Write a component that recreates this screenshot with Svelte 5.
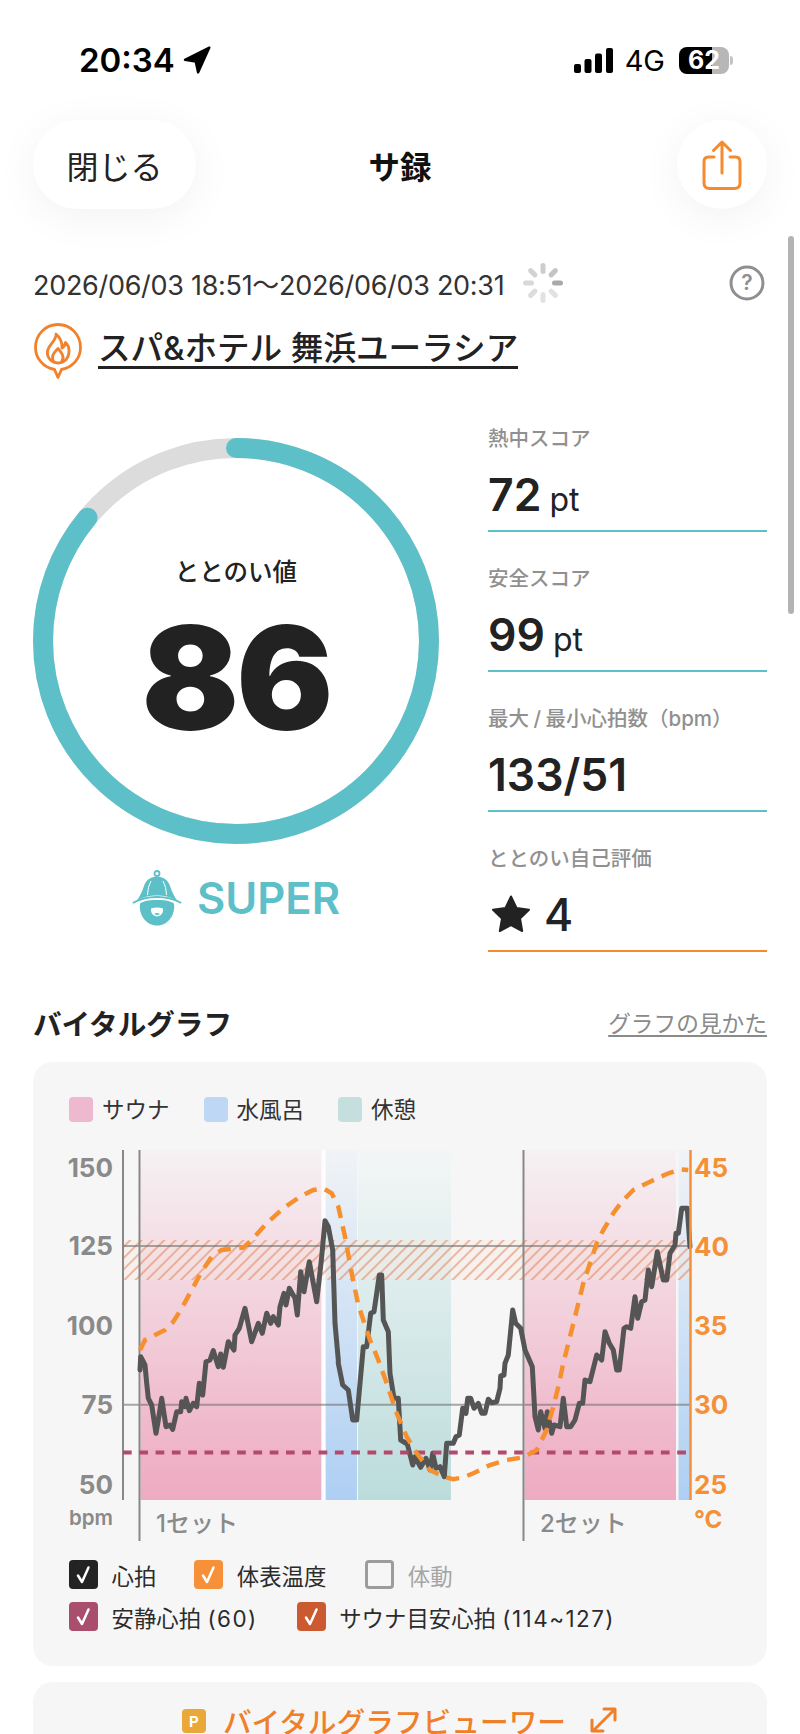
<script>
  // traces were read from magnified crops: each is [origin x, origin y, x scale, y scale, points]
  const map = (ox, oy, sx, sy, pts) => pts.map(([x, y]) => [ox + x / sx, oy + y / sy]);
  const toStr = (list) => list.map(([x, y]) => `${x.toFixed(1)},${y.toFixed(1)}`).join(' ');

  const heart = [
    ...map(30, 1340, 3, 3, [[330,90],[332,50],[345,75],[350,130],[355,175],[365,195],[378,280],[385,240],[395,175],[408,260],[420,255],[428,268],[440,215],[452,215],[455,185],[465,200],[468,175],[478,212],[490,190],[500,200],[508,130],[518,165],[528,65],[540,60],[550,32],[565,80],[572,42],[580,82]]),
    ...map(30, 1060, 3, 3, [[595,845],[612,870],[615,825],[628,805],[645,745],[665,845],[685,790],[697,820],[710,760],[722,790],[730,770],[745,795],[750,740],[762,700],[768,735],[778,685],[795,715],[802,765],[812,635],[822,695],[838,605],[860,725],[875,590],[885,482],[895,500],[908,570],[915,790],[925,900]]),
    ...map(320, 1240, 3, 3, [[55,370],[68,435],[85,450],[98,540],[110,540],[130,320],[140,320],[152,220],[162,215],[170,160],[178,105],[185,105],[190,240],[205,275],[210,400],[222,475],[235,475],[242,600],[262,612],[278,675],[285,650],[302,682],[318,655],[330,690],[338,640],[348,685],[360,680],[373,710],[380,610],[400,610],[408,590],[418,585],[428,505],[438,520],[443,475],[452,475],[462,505],[475,490],[485,520],[495,520],[505,478],[515,488],[530,485],[540,445],[542,408],[552,405],[555,370],[565,345]]),
    ...map(500, 1240, 3, 3, [[38,210],[47,250],[62,265],[75,330],[97,380],[105,530],[115,570],[122,515],[135,565],[142,515],[155,580],[162,555],[180,560],[190,475],[200,560],[212,560],[225,540],[238,490],[248,490],[255,420],[270,425],[290,345],[305,360],[315,275],[328,310],[340,330],[350,390],[358,390],[372,265],[380,260],[392,265],[405,170],[413,235],[425,185],[435,180],[445,90],[455,140],[472,35],[490,120],[500,120],[510,40],[525,15]]),
    ...map(400, 1060, 3, 3, [[828,520],[835,520],[845,445],[862,445],[870,560]])
  ];
  const temp = [
    ...map(30, 1060, 3, 3, [[330,870],[345,840],[375,825],[405,810],[430,785],[455,745],[485,690],[515,635],[545,590],[575,570],[640,563],[670,535],[710,490],[760,445],[810,410],[850,390],[880,385],[905,400],[925,440],[945,530],[965,640],[985,735]]),
    ...map(30, 1340, 3, 3, [[1020,0],[1045,60],[1070,130],[1100,220],[1130,290],[1160,340],[1200,390]]),
    ...map(320, 1240, 3, 3, [[370,710],[400,718],[430,712],[460,700],[510,675],[560,660],[610,652],[650,630],[680,570],[700,500]]),
    ...map(500, 1240, 3, 3, [[175,440],[190,370],[210,290],[230,210],[250,130],[270,70],[290,10]]),
    ...map(400, 1060, 3, 3, [[610,510],[640,460],[665,425],[700,390],[750,365],[800,342],[840,328],[865,330]])
  ];
  const heartPts = toStr(heart);
  const tempPts = toStr(temp);

  const stats = [
    { label: '熱中スコア', value: '72', unit: 'pt' },
    { label: '安全スコア', value: '99', unit: 'pt' },
    { label: '最大 / 最小心拍数（bpm）', value: '133/51', unit: '' }
  ];
  const leftTicks = [['150', 1177], ['125', 1255], ['100', 1335], ['75', 1414], ['50', 1494]];
  const rightTicks = [['45', 1177], ['40', 1256], ['35', 1335], ['30', 1414], ['25', 1494]];
  const spokes = [
    [0, '#a9a9a9'], [45, '#e2e2e2'], [90, '#e2e2e2'], [135, '#dcdcdc'],
    [180, '#d8d8d8'], [225, '#d2d2d2'], [270, '#cdcdcd'], [315, '#c4c4c4']
  ];
  const r = 193;
  const circ = 2 * Math.PI * r;
  const dash = `${(circ * 0.86).toFixed(1)} ${circ.toFixed(1)}`;
</script>

<div class="page">
  <div class="status">
    <div class="time">
      <span>20:34</span>
      <svg class="loc" viewBox="0 0 26 26" width="28" height="28"><path d="M24.500 1.500 L1.800 12.800 L11.800 14.400 L14 24.500 Z" fill="#000" stroke="#000" stroke-width="2.200" stroke-linejoin="round"/></svg>
    </div>
    <div class="sys">
      <svg viewBox="0 0 39 25" width="39" height="25" class="signal">
        <rect x="0" y="16" width="7" height="9" rx="2"/><rect x="10.500" y="11" width="7" height="14" rx="2"/>
        <rect x="21" y="5.500" width="7" height="19.500" rx="2"/><rect x="32" y="0" width="7" height="25" rx="2"/>
      </svg>
      <span class="net">4G</span>
      <div class="batt"><span>62</span></div>
    </div>
  </div>

  <header class="nav">
    <button class="close">閉じる</button>
    <div class="navtitle">サ録</div>
    <button class="share" aria-label="共有">
      <svg viewBox="0 0 40 50" width="40" height="50" fill="none" stroke="#f58a2e" stroke-width="3" stroke-linecap="round" stroke-linejoin="round">
        <path d="M12 17 H6.500 Q2 17 2 21.500 V43 Q2 48.500 7.500 48.500 H32.500 Q38 48.500 38 43 V21.500 Q38 17 33.500 17 H28"/>
        <path d="M20 33 V2 M11.500 10.500 L20 2 L28.500 10.500"/>
      </svg>
    </button>
  </header>

  <main class="content">
    <div class="meta">
      <span class="date">2026/06/03 18:51～2026/06/03 20:31</span>
      <svg class="spin" viewBox="-20 -20 40 40" width="40" height="40">
        {#each spokes as [a, c]}
          <rect x="9" y="-2.500" width="11" height="5" rx="2.500" fill={c} transform="rotate({a})"/>
        {/each}
      </svg>
      <svg class="help" viewBox="0 0 36 36" width="36" height="36">
        <circle cx="18" cy="18" r="16" fill="none" stroke="#8f8f8f" stroke-width="3"/>
        <text x="18" y="25" text-anchor="middle" class="q">?</text>
      </svg>
    </div>

    <div class="place">
      <svg viewBox="0 0 48 56" width="48" height="56" fill="none" stroke="#f2812b" stroke-width="2.800" stroke-linejoin="round" stroke-linecap="round">
        <path d="M20.500 46.500 C9 44.500 1.500 35 1.500 24.500 C1.500 11.500 11.500 1.500 24 1.500 C36.500 1.500 46.500 11.500 46.500 24.500 C46.500 35 39 44.500 27.500 46.500 L24 54.500 Z"/>
        <path d="M22 11 C23 17 15 21 13.500 28 C12.500 35 18 40 24 40 C31 40 35.500 34 35 27 C35 24 33.500 21.500 31.500 19.500 C31 22.500 30 24 28 25 C28.500 20 26 14 22 11 Z"/>
        <path d="M20 39 C17 34 18.500 31 24 25.500 C28 30 31 34 27.500 39"/>
      </svg>
      <a class="placename">スパ&ホテル 舞浜ユーラシア</a>
    </div>

    <section class="scores">
      <div class="gaugecol">
        <div class="gauge">
          <svg viewBox="0 0 406 406" width="406" height="406" class="ring">
            <circle cx="203" cy="203" r={r} fill="none" stroke="#dcdcdc" stroke-width="20"/>
            <circle cx="203" cy="203" r={r} fill="none" stroke="#5dc0c8" stroke-width="20" stroke-linecap="round" stroke-dasharray={dash} transform="rotate(-90 203 203)"/>
          </svg>
          <div class="gaugetext">
            <div class="gl">ととのい値</div>
            <div class="gv">86</div>
          </div>
        </div>
        <div class="rank">
          <svg viewBox="0 0 50 56" width="50" height="56">
            <circle cx="25" cy="3.500" r="2.500" fill="none" stroke="#5dc0c8" stroke-width="1.800"/>
            <path d="M5 30.500 C8 26 10 22 12 16 C14 10 19 6.500 25 6.500 C31 6.500 36 10 38 16 C40 22 42 26 45 30.500 C38 26.500 32 25.500 25 25.500 C18 25.500 12 26.500 5 30.500 Z" fill="#5dc0c8"/>
            <path d="M19 11 Q15.500 17 15.500 25 M31 11 Q34.500 17 34.500 25" fill="none" stroke="#fff" stroke-width="1"/>
            <path d="M0.800 33 C10 27.500 17 27 25 27 C33 27 40 27.500 49.200 33" fill="none" stroke="#5dc0c8" stroke-width="1.800"/>
            <path d="M8 33.500 C14 30 19 30 25 30 C31 30 36 30 42 33.500 C43.500 45 36 55.500 25 55.500 C14 55.500 6.500 45 8 33.500 Z" fill="#5dc0c8"/>
            <path d="M19 38.500 Q25 36.500 31 38.500 Q31.500 45.500 25 46.500 Q18.500 45.500 19 38.500 Z" fill="#fff"/>
            <path d="M22 44 Q25 42 28 44 Q25 46 22 44 Z" fill="#5dc0c8"/>
          </svg>
          <span>SUPER</span>
        </div>
      </div>

      <div class="stats">
        {#each stats as s}
          <div class="stat">
            <div class="sl">{s.label}</div>
            <div class="sv">{s.value}{#if s.unit}<span class="unit">{s.unit}</span>{/if}</div>
          </div>
        {/each}
        <div class="stat self">
          <div class="sl">ととのい自己評価</div>
          <div class="sv star">
            <svg viewBox="0 0 40 38" width="40" height="38"><path d="M20 1.500 L25.500 13 L38 14.800 L29 23.500 L31.200 36 L20 30 L8.800 36 L11 23.500 L2 14.800 L14.500 13 Z" fill="#222" stroke="#222" stroke-width="2" stroke-linejoin="round"/></svg>
            <span>4</span>
          </div>
        </div>
      </div>
    </section>

    <div class="secthead">
      <h2>バイタルグラフ</h2>
      <a class="how">グラフの見かた</a>
    </div>

    <section class="card graph">
      <div class="legend">
        <div class="li"><i class="sw sauna"></i>サウナ</div>
        <div class="li"><i class="sw water"></i>水風呂</div>
        <div class="li"><i class="sw rest"></i>休憩</div>
      </div>

      <svg class="chart" viewBox="33 1148 734 393" width="734" height="393">
        <defs>
          <linearGradient id="gs" x1="0" y1="0" x2="0" y2="1"><stop offset="0" stop-color="#f6f1f3"/><stop offset="1" stop-color="#eeaac1"/></linearGradient>
          <linearGradient id="gw" x1="0" y1="0" x2="0" y2="1"><stop offset="0" stop-color="#f1f3f6"/><stop offset="1" stop-color="#aecff3"/></linearGradient>
          <linearGradient id="gr" x1="0" y1="0" x2="0" y2="1"><stop offset="0" stop-color="#f3f6f6"/><stop offset="1" stop-color="#bcdcdc"/></linearGradient>
          <pattern id="hatch" width="8" height="8" patternUnits="userSpaceOnUse" patternTransform="rotate(45)">
            <line x1="1" y1="0" x2="1" y2="8" stroke="#e0714a" stroke-width="1.500" stroke-opacity=".6"/>
          </pattern>
        </defs>

        <rect x="140.500" y="1150" width="181" height="350" fill="url(#gs)"/>
        <rect x="325.500" y="1150" width="31.500" height="350" fill="url(#gw)"/>
        <rect x="358" y="1150" width="93" height="350" fill="url(#gr)"/>
        <rect x="524.500" y="1150" width="151.500" height="350" fill="url(#gs)"/>
        <rect x="678.500" y="1150" width="12" height="350" fill="url(#gw)"/>
        <rect x="321.500" y="1150" width="4" height="350" fill="#fff" fill-opacity=".8"/>

        <rect x="123" y="1240" width="567" height="40" fill="#f6e8de" fill-opacity=".35"/>
        <rect x="123" y="1240" width="567" height="40" fill="url(#hatch)"/>

        <line x1="123" y1="1246" x2="690" y2="1246" class="grid"/>
        <line x1="123" y1="1404.700" x2="690" y2="1404.700" class="grid"/>
        <line x1="123" y1="1150" x2="123" y2="1500" class="axis"/>
        <line x1="139.500" y1="1150" x2="139.500" y2="1541" class="axis"/>
        <line x1="523.500" y1="1150" x2="523.500" y2="1541" class="axis"/>

        <polyline points={heartPts} class="heart"/>
        <line x1="123" y1="1452.500" x2="686" y2="1452.500" class="restline"/>
        <polyline points={tempPts} class="temp"/>
        <line x1="690.500" y1="1150" x2="690.500" y2="1500" class="axisr"/>

        {#each leftTicks as [t, y]}
          <text x="113" y={y} text-anchor="end" class="tick">{t}</text>
        {/each}
        {#each rightTicks as [t, y]}
          <text x="694" y={y} class="tick or">{t}</text>
        {/each}
        <text x="113" y="1525" text-anchor="end" class="bpm">bpm</text>
        <text x="694" y="1528" class="tick or unitc">°C</text>
        <text x="156" y="1532" class="setl">1セット</text>
        <text x="540" y="1532" class="setl">2セット</text>
      </svg>

      <div class="checks">
        <div class="chk" style="--c:#232323"><i class="box"><svg viewBox="0 0 29 29"><path d="M9 15.500 L13 22 L19.500 7.500"/></svg></i>心拍</div>
        <div class="chk" style="--c:#f6913a"><i class="box"><svg viewBox="0 0 29 29"><path d="M9 15.500 L13 22 L19.500 7.500"/></svg></i>体表温度</div>
        <div class="chk off"><i class="box"></i>体動</div>
      </div>
      <div class="checks two">
        <div class="chk" style="--c:#a94f6d"><i class="box"><svg viewBox="0 0 29 29"><path d="M9 15.500 L13 22 L19.500 7.500"/></svg></i><span>安静心拍{' '}<span class="num">(60)</span></span></div>
        <div class="chk" style="--c:#cc5a30"><i class="box"><svg viewBox="0 0 29 29"><path d="M9 15.500 L13 22 L19.500 7.500"/></svg></i><span>サウナ目安心拍{' '}<span class="num">(114~127)</span></span></div>
      </div>
    </section>

    <section class="card viewer">
      <i class="pbadge">P</i>
      <span class="vt">バイタルグラフビューワー</span>
      <svg viewBox="0 0 28 28" width="28" height="28" fill="none" stroke="#f07f2a" stroke-width="3" stroke-linecap="round" stroke-linejoin="round">
        <path d="M4 24 L24 4 M14 3 H25 V14 M2 14 V25 H13"/>
      </svg>
    </section>
  </main>

  <div class="scrollbar"></div>
</div>

<style>
  :global(body) { margin: 0; background: #fff; }
  .page {
    position: relative;
    width: 800px;
    height: 1734px;
    overflow: hidden;
    background: #fff;
    color: #222;
    font-family: Inter, "Noto Sans CJK JP", sans-serif;
  }
  .status {
    display: flex;
    justify-content: space-between;
    align-items: center;
    box-sizing: border-box;
    height: 120px;
    padding: 0 71px 0 79px;
    color: #000;
  }
  .time { display: flex; align-items: center; gap: 8px; font-size: 33px; font-weight: 600; line-height: 1; }
  .sys { display: flex; align-items: center; }
  .signal { fill: #000; }
  .net { margin-left: 12px; font-size: 29px; font-weight: 400; line-height: 1; }
  .batt {
    position: relative;
    width: 50px;
    height: 27px;
    margin-left: 14px;
    border-radius: 8px;
    background: linear-gradient(90deg, #000 66%, #b7b7b7 66%);
    display: flex;
    align-items: center;
    justify-content: center;
    color: #fff;
    font-size: 25px;
    font-weight: 700;
  }
  .batt::after {
    content: "";
    position: absolute;
    right: -4px;
    top: 9px;
    width: 3px;
    height: 9px;
    border-radius: 0 3px 3px 0;
    background: #c4c4c4;
  }
  .nav {
    display: grid;
    grid-template-columns: 1fr auto 1fr;
    align-items: center;
    height: 89px;
    padding: 0 33px;
  }
  .close, .share {
    border: 0;
    background: #fff;
    height: 89px;
    box-shadow: 0 8px 44px rgba(0, 0, 0, 0.055);
    font-family: inherit;
    color: #222;
    padding: 0;
    display: flex;
    align-items: center;
    justify-content: center;
  }
  .close { width: 163px; border-radius: 44px; font-size: 32px; }
  .share { width: 90px; border-radius: 50%; justify-self: end; }
  .navtitle { font-size: 31.500px; font-weight: 700; color: #111; }
  .content { display: flex; flex-direction: column; padding: 0 33px; }
  .meta {
    display: flex;
    align-items: center;
    height: 44px;
    margin-top: 52px;
    color: #333;
  }
  .date { font-size: 27px; letter-spacing: -0.3px; white-space: nowrap; }
  .spin { margin-left: 19px; }
  .help { margin-left: auto; margin-right: 2px; }
  .q { font-size: 21px; font-weight: 600; fill: #8f8f8f; }
  .place { display: flex; align-items: center; gap: 16px; margin-top: 15px; }
  .place svg { flex: none; margin-left: 1px; margin-top: 3px; }
  .placename {
    font-size: 32.600px;
    font-weight: 500;
    line-height: 35px;
    color: #222;
    border-bottom: 3px solid #222;
    white-space: nowrap;
  }
  .scores { display: flex; justify-content: space-between; margin-top: 13px; }
  .gaugecol { width: 406px; display: flex; flex-direction: column; align-items: center; }
  .gauge { position: relative; width: 406px; height: 406px; margin-top: 46px; }
  .ring { display: block; }
  .gaugetext {
    position: absolute;
    inset: 0;
    display: flex;
    flex-direction: column;
    align-items: center;
  }
  .gl { margin-top: 116px; font-size: 24.500px; font-weight: 500; line-height: 36px; }
  .gv { margin-top: 18px; font-size: 144px; font-weight: 900; line-height: 140px; letter-spacing: -3px; color: #222; }
  .rank {
    display: flex;
    align-items: center;
    gap: 15px;
    margin-top: 26px;
    color: #5dc0c8;
    font-size: 43.500px;
    font-weight: 600;
    line-height: 56px;
  }
  .stats { width: 279px; display: flex; flex-direction: column; }
  .stat {
    box-sizing: border-box;
    height: 140px;
    border-bottom: 2px solid #5dc0c8;
    padding-top: 32px;
  }
  .stat.self { border-bottom-color: #f58a2e; }
  .sl { font-size: 20.500px; font-weight: 500; color: #909090; line-height: 30px; white-space: nowrap; word-spacing: -1px; }
  .sv {
    display: flex;
    align-items: baseline;
    margin-top: 15px;
    font-size: 44.500px;
    font-weight: 600;
    line-height: 52px;
    color: #222;
  }
  .unit { margin-left: 8px; font-size: 32px; font-weight: 400; }
  .star { align-items: center; gap: 13px; font-weight: 500; padding-left: 3px; }
  .star svg { margin-top: -2px; }
  .secthead {
    display: flex;
    align-items: center;
    justify-content: space-between;
    margin-top: 50px;
    height: 40px;
  }
  h2 { margin: 0; font-size: 28.600px; font-weight: 700; color: #222; }
  .how { font-size: 22.700px; color: #8a8a8a; text-decoration: underline; text-underline-offset: 3px; }
  .card { background: #f6f6f6; border-radius: 20px; }
  .graph { margin-top: 20px; padding: 35px 0; height: 604px; box-sizing: border-box; }
  .legend { display: flex; height: 25px; padding-left: 36px; font-size: 22.500px; color: #333; }
  .li { display: flex; align-items: center; gap: 9px; margin-right: 34px; line-height: 25px; }
  .sw { display: block; width: 24px; height: 25px; border-radius: 4px; }
  .sauna { background: #eeb9ce; }
  .water { background: #bdd7f5; }
  .rest { background: #c5dfdf; }
  .chart { display: block; margin-top: 26px; }
  .grid { stroke: #6f6f6f; stroke-width: 2; stroke-opacity: 0.6; }
  .axis { stroke: #888; stroke-width: 2; }
  .axisr { stroke: #f59038; stroke-width: 2.500; }
  .heart { fill: none; stroke: #555; stroke-width: 5; stroke-linejoin: round; stroke-linecap: round; }
  .temp { fill: none; stroke: #f6902f; stroke-width: 4.500; stroke-dasharray: 13 8.500; }
  .restline { stroke: #b14a6c; stroke-width: 4; stroke-dasharray: 8.700 7.600; }
  .tick { font-size: 26px; font-weight: 700; fill: #8a8a8a; }
  .or { fill: #f59038; }
  .unitc { font-size: 24px; }
  .bpm { font-size: 20.500px; font-weight: 600; fill: #8a8a8a; }
  .setl { font-size: 24px; font-weight: 500; fill: #8a8a8a; }
  .checks { display: flex; gap: 38px; height: 29px; margin-top: 19px; padding-left: 36px; font-size: 22.400px; color: #2b2b2b; }
  .checks.two { margin-top: 13px; gap: 39px; }
  .num { letter-spacing: 1.500px; }
  .chk { display: flex; align-items: center; gap: 13.500px; white-space: nowrap; }
  .box { display: block; width: 29px; height: 29px; border-radius: 4px; background: var(--c); box-sizing: border-box; }
  .box svg { display: block; width: 29px; height: 29px; fill: none; stroke: #fff; stroke-width: 2.500; stroke-linecap: round; stroke-linejoin: round; }
  .chk.off { color: #a5a5a5; margin-left: 1px; }
  .chk.off .box { background: transparent; border: 3px solid #9c9c9c; }
  .viewer {
    margin-top: 16px;
    height: 100px;
    display: flex;
    align-items: flex-start;
    justify-content: center;
    padding-top: 24px;
    gap: 17px;
    box-sizing: border-box;
  }
  .pbadge {
    display: flex;
    align-items: center;
    justify-content: center;
    width: 24px;
    height: 24px;
    margin-top: 3px;
    border-radius: 4px;
    background: #e8a83a;
    color: #fff;
    font-style: normal;
    font-size: 15px;
    font-weight: 700;
  }
  .vt { font-size: 28.700px; font-weight: 500; color: #f07f2a; line-height: 34px; }
  .viewer svg { margin-left: 7px; }
  .scrollbar {
    position: absolute;
    left: 788px;
    top: 236px;
    width: 6px;
    height: 378px;
    border-radius: 3px;
    background: #b3b3b3;
  }
</style>
